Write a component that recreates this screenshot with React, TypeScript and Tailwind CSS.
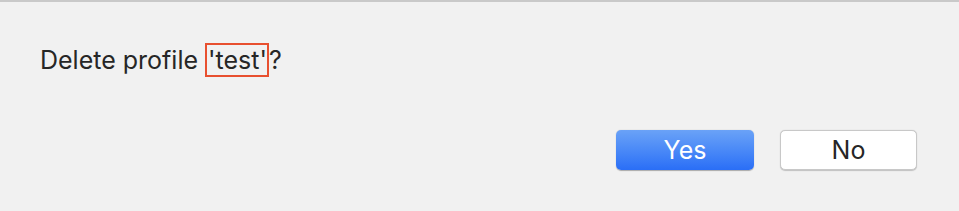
import React from 'react';

const App: React.FC = () => {
  return (
    <div className="w-[959px] h-[211px] bg-[#f1f1f1] border-t-2 border-[#c9c9c9] font-['Inter','Liberation_Sans',sans-serif] text-[#262626] flex flex-col">
      <div className="pl-[40px] pt-[41px] flex items-center text-[25px] leading-[30px]">
        <span>Delete profile&nbsp;</span>
        <span className="border-2 border-[#e8502f] pl-[1px] pr-0 leading-[30px]">'test'</span>
        <span>?</span>
      </div>
      <div className="flex justify-end gap-[26px] pr-[42px] mt-[53px]">
        <button className="w-[138px] h-[40px] rounded-[5px] bg-gradient-to-b from-[#6aa2f7] to-[#2a6ef6] text-white text-[25px] leading-none shadow-[0_0.5px_1px_rgba(0,0,0,0.3)]">
          Yes
        </button>
        <button className="w-[137px] h-[40px] rounded-[5px] bg-white border border-[#c8c8c8] text-[#262626] text-[25px] leading-none shadow-[0_0.5px_1px_rgba(0,0,0,0.2)]">
          No
        </button>
      </div>
    </div>
  );
};

export default App;
